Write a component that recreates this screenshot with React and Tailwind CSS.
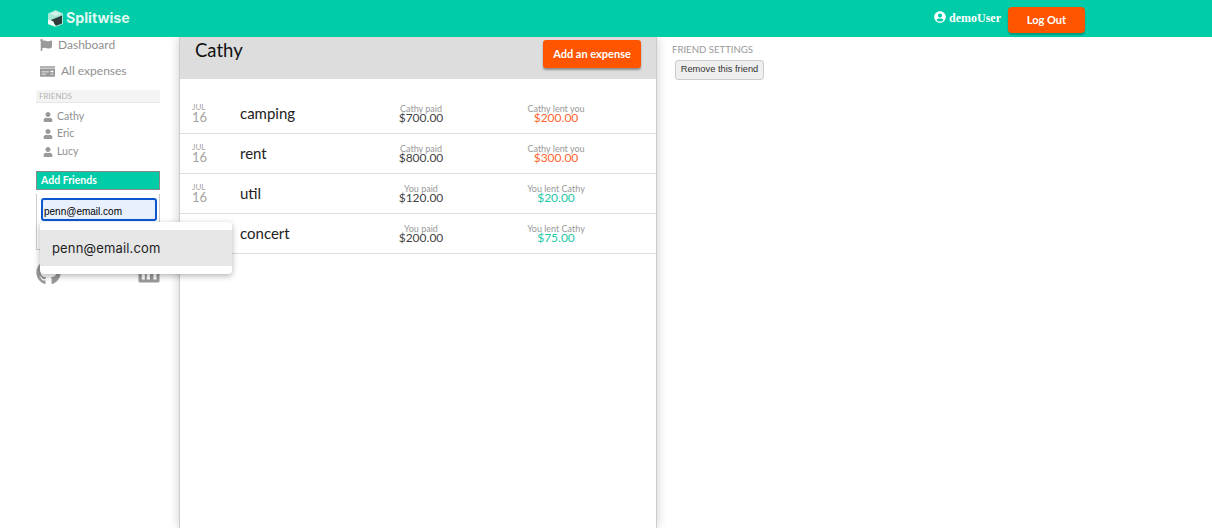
import { FaFlag, FaMoneyCheck, FaUser, FaUserCircle, FaGithub, FaLinkedin } from 'react-icons/fa';

const expenses = [
    { day: '16', name: 'camping', payer: 'Cathy paid', paid: '$700.00', lentLabel: 'Cathy lent you', lent: '$200.00', owe: true },
    { day: '16', name: 'rent', payer: 'Cathy paid', paid: '$800.00', lentLabel: 'Cathy lent you', lent: '$300.00', owe: true },
    { day: '16', name: 'util', payer: 'You paid', paid: '$120.00', lentLabel: 'You lent Cathy', lent: '$20.00', owe: false },
    { day: '16', name: 'concert', payer: 'You paid', paid: '$200.00', lentLabel: 'You lent Cathy', lent: '$75.00', owe: false },
];

const friends = ['Cathy', 'Eric', 'Lucy'];

const Logo = () => (
    <svg width="17" height="17" viewBox="0 0 17 17">
        <path d="M8.5 0 L16 3.5 L16 14 L8.5 17 L1 14 L1 3.5 Z" fill="#a5e8d6" />
        <path d="M3 3.8 L8.5 1.2 L14 3.8 L8.5 6 Z" fill="#d2f5ea" />
        <path d="M4 10 L15 5.5 L15 13.4 L9 15.8 Z" fill="#2f3b3a" />
        <path d="M1 9.5 L6.5 11.5 L8 16.5 L1 14 Z" fill="#f4fbf9" />
    </svg>
);

const Header = () => (
    <header className="h-[37px] bg-[#00cca7] flex items-center justify-between pl-[47px] pr-[127px] relative z-10">
        <div className="flex items-center gap-[2px]">
            <Logo />
            <span className="font-['Inter',sans-serif] font-bold text-[14.2px] leading-none text-[#dff8f1]">Splitwise</span>
        </div>
        <div className="flex items-center">
            <FaUserCircle className="text-white text-[12px] mr-[3px] mb-[3px]" />
            <span className="font-['Liberation_Serif',serif] font-bold text-[12px] text-white mb-[2px]">demoUser</span>
            <button className="ml-[7px] mt-[3px] w-[77px] h-[26px] bg-[#ff5500] rounded-[4px] text-white text-[11px] font-bold shadow-[0_2px_2px_rgba(0,0,0,0.25)]">Log Out</button>
        </div>
    </header>
);

const Sidebar = () => (
    <aside className="w-[124px] ml-[36px] mr-[19px] shrink-0 text-[#999]">
        <div className="flex items-center h-[16px] pl-[4px] text-[12px]">
            <FaFlag className="text-[12px] mr-[6px]" />
            <span className="text-[#8f8f8f]">Dashboard</span>
        </div>
        <div className="flex items-center h-[16px] pl-[4px] mt-[10px] text-[12px]">
            <FaMoneyCheck className="text-[15px] mr-[6px]" />
            <span className="text-[#8f8f8f]">All expenses</span>
        </div>
        <div className="mt-[11px] h-[13px] bg-[#f4f4f4] border-b border-[#e6e6e6] pl-[3px] text-[8px] leading-[12px] text-[#b5b5b5]">FRIENDS</div>
        <ul className="mt-[5px] pl-[7px]">
            {friends.map((f) => (
                <li key={f} className="flex items-center h-[17.5px] text-[10.5px] text-[#8f8f8f]">
                    <FaUser className="text-[10px] mr-[4px] text-[#999]" />
                    {f}
                </li>
            ))}
        </ul>
        <div className="mt-[10.5px] h-[19px] bg-[#00cca7] border border-[#888] pl-[4px] text-[10.5px] font-bold leading-[16px] text-white">Add Friends</div>
        <div className="relative h-[56px] mt-[4px] border-x border-b border-[#ccc]">
            <input
                readOnly
                value="penn@email.com"
                className="absolute left-[4px] top-[4px] w-[116px] h-[23px] bg-[#e8f0fe] border-2 border-[#0b57d0] rounded-[3px] pl-[1px] pt-[3px] text-[10px] text-black font-['Liberation_Sans',sans-serif] outline-none"
            />
        </div>
        <div className="flex justify-between items-start mt-[10px] text-[25px] text-[#999]">
            <FaGithub />
            <FaLinkedin className="text-[24px] mr-[-1px]" />
        </div>
        <div className="absolute left-[40px] top-[222px] w-[192px] h-[52px] bg-white rounded-[4px] shadow-[0_2px_6px_rgba(0,0,0,0.3)] py-[8px] z-20">
            <div className="h-[36px] bg-[#e6e6e6] pl-[12px] pt-[1px] flex items-center text-[13px] tracking-[0.15px] text-[#222] font-['Inter',sans-serif]">penn@email.com</div>
        </div>
    </aside>
);

const ExpenseRow = ({ expense }) => (
    <div className="flex items-center h-[40px] border-b border-[#ddd]">
        <div className="w-[60px] pl-[12px] pb-[1px] text-[#a3a3a3]">
            <div className="text-[8px] leading-[8px]">JUL</div>
            <div className="text-[13px] leading-[12px]">{expense.day}</div>
        </div>
        <div className="w-[130px] text-[15px] text-[#222]">{expense.name}</div>
        <div className="w-[102px] pb-[2px] text-center">
            <div className="text-[9px] leading-[10px] text-[#999]">{expense.payer}</div>
            <div className="text-[12px] leading-[8px] text-[#444]">{expense.paid}</div>
        </div>
        <div className="w-[168px] pb-[2px] text-center">
            <div className="text-[9px] leading-[10px] text-[#999]">{expense.lentLabel}</div>
            <div className={`text-[12px] leading-[8px] ${expense.owe ? 'text-[#ff652f]' : 'text-[#1cc9a6]'}`}>{expense.lent}</div>
        </div>
    </div>
);

const MainPanel = () => (
    <main className="w-[478px] shrink-0 border-x border-[#ccc] shadow-[0_0_10px_rgba(0,0,0,0.2)] bg-white">
        <div className="h-[42px] bg-[#dddddd] flex justify-between items-start pl-[15px] pr-[15px]">
            <h1 className="text-[18.5px] leading-[26px] text-[#111]">Cathy</h1>
            <button className="mt-[3px] w-[98px] h-[28px] bg-[#ff5500] rounded-[3px] text-white text-[11px] font-bold shadow-[0_2px_2px_rgba(0,0,0,0.35)]">Add an expense</button>
        </div>
        <div className="mt-[15px]">
            {expenses.map((e) => (
                <ExpenseRow key={e.name} expense={e} />
            ))}
        </div>
    </main>
);

const SettingsPanel = () => (
    <section className="ml-[15px] pt-[6px]">
        <div className="text-[9.6px] leading-[13px] text-[#999]">FRIEND SETTINGS</div>
        <button className="block mt-[4px] ml-[3px] w-[89px] h-[20px] bg-[#efefef] border border-[#ccc] rounded-[3px] text-[9.3px] text-[#333] font-['Liberation_Sans',sans-serif]">Remove this friend</button>
    </section>
);

export default function App() {
    return (
        <div className="h-[528px] overflow-hidden bg-white font-['Lato',sans-serif] relative">
            <Header />
            <div className="flex h-[491px] items-stretch">
                <Sidebar />
                <MainPanel />
                <SettingsPanel />
            </div>
        </div>
    );
}
